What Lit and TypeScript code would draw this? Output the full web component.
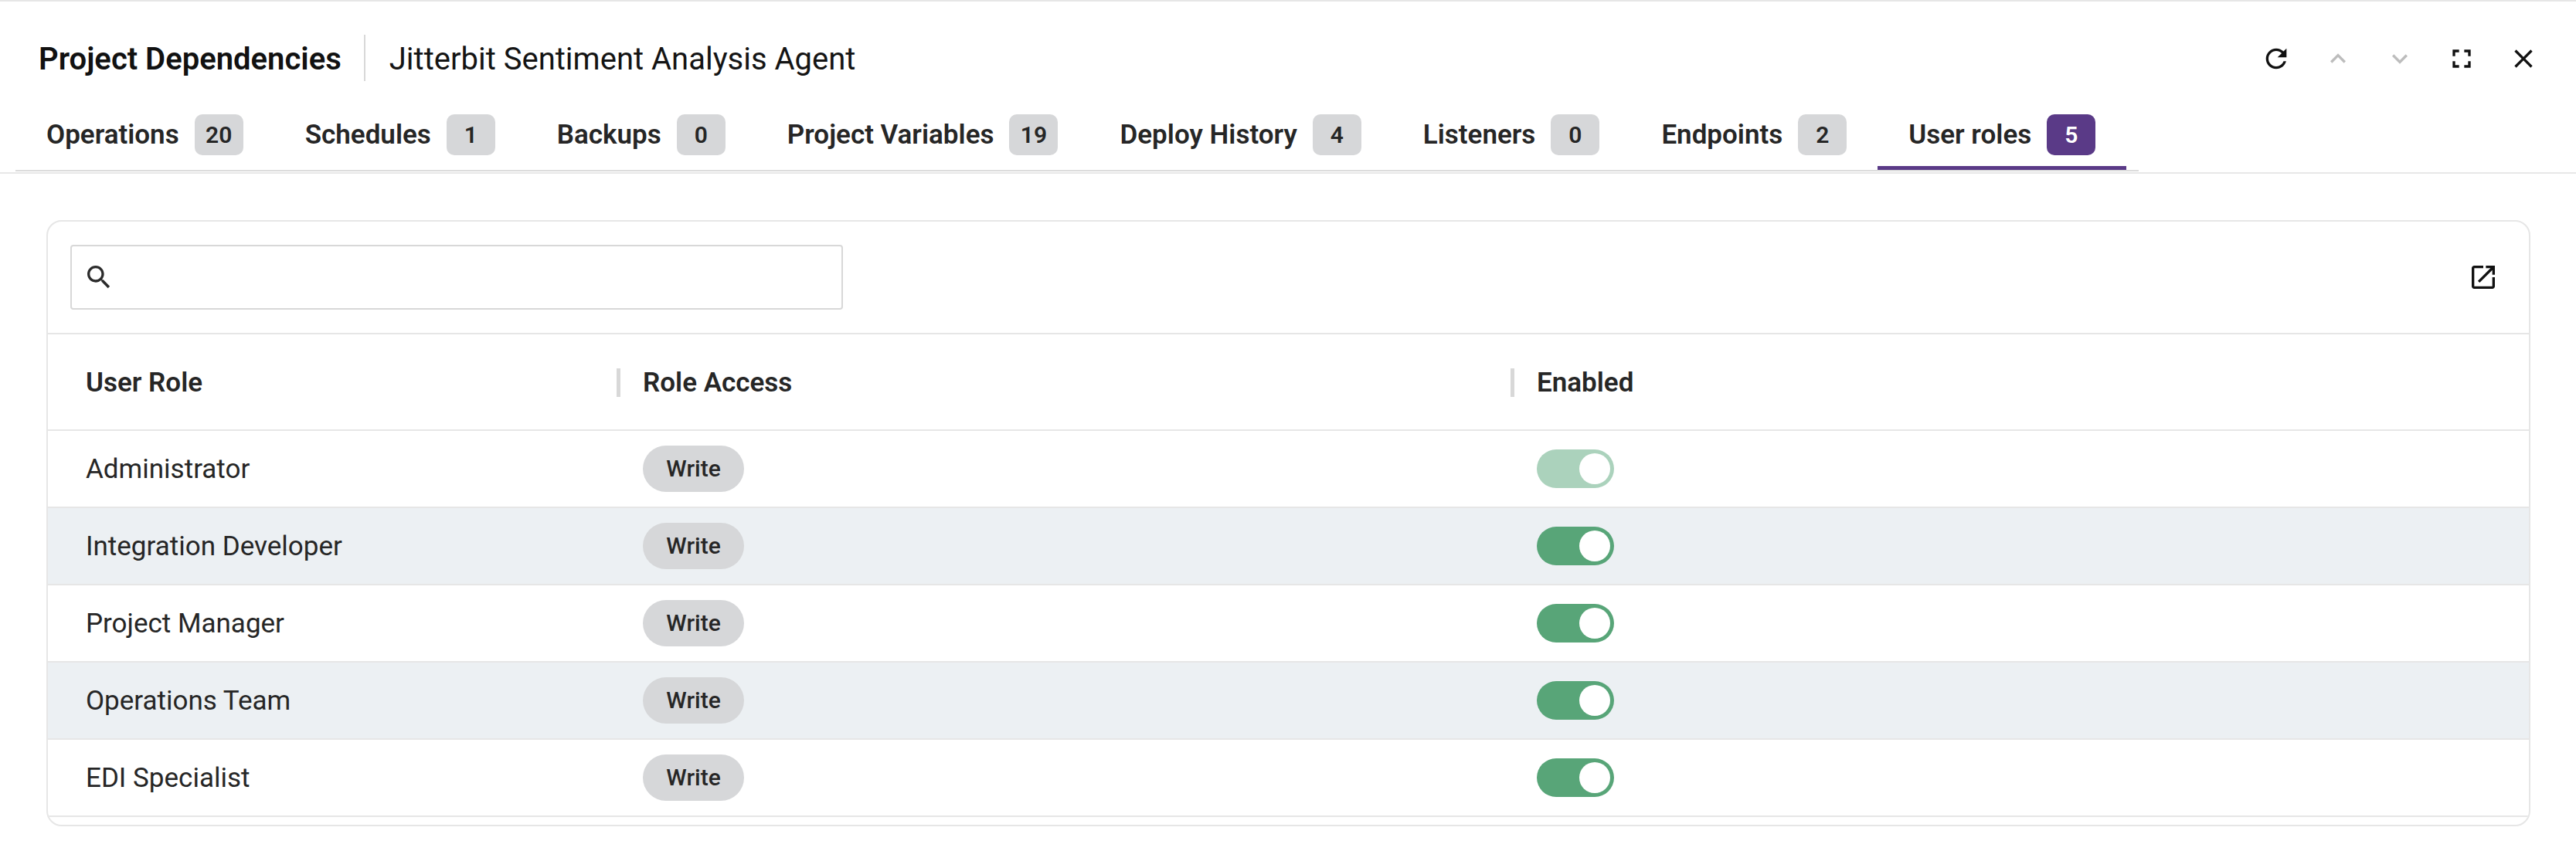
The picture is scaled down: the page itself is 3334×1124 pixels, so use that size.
import { LitElement, css, html, svg } from 'lit';
import { customElement } from 'lit/decorators.js';
import { classMap } from 'lit/directives/class-map.js';

const TABS = [
  { label: 'Operations', count: 20 },
  { label: 'Schedules', count: 1 },
  { label: 'Backups', count: 0 },
  { label: 'Project Variables', count: 19 },
  { label: 'Deploy History', count: 4 },
  { label: 'Listeners', count: 0 },
  { label: 'Endpoints', count: 2 },
  { label: 'User roles', count: 5, active: true },
];

const ROLES = [
  { name: 'Administrator', locked: true },
  { name: 'Integration Developer' },
  { name: 'Project Manager' },
  { name: 'Operations Team' },
  { name: 'EDI Specialist' },
];

// material icon paths, 24 unit box
const ICONS = {
  refresh:
    'M17.65 6.35C16.2 4.9 14.21 4 12 4c-4.42 0-7.99 3.58-7.99 8s3.57 8 7.99 8c3.73 0 6.84-2.55 7.73-6h-2.08c-.82 2.33-3.04 4-5.65 4-3.31 0-6-2.69-6-6s2.69-6 6-6c1.66 0 3.14.69 4.22 1.78L13 11h7V4l-2.35 2.35z',
  up: 'M12 8l-6 6 1.41 1.41L12 10.83l4.59 4.58L18 14z',
  down: 'M16.59 8.59L12 13.17 7.41 8.59 6 10l6 6 6-6z',
  full: 'M7 14H5v5h5v-2H7v-3zm-2-4h2V7h3V5H5v5zm12 7h-3v2h5v-5h-2v3zM14 5v2h3v3h2V5h-5z',
  close:
    'M19 6.41L17.59 5 12 10.59 6.41 5 5 6.41 10.59 12 5 17.59 6.41 19 12 13.41 17.59 19 19 17.59 13.41 12z',
  search:
    'M15.5 14h-.79l-.28-.27C15.41 12.59 16 11.11 16 9.5 16 5.91 13.09 3 9.5 3S3 5.91 3 9.5 5.91 16 9.5 16c1.61 0 3.09-.59 4.23-1.57l.27.28v.79l5 4.99L20.49 19l-4.99-5zm-6 0C7.01 14 5 11.99 5 9.5S7.01 5 9.5 5 14 7.01 14 9.5 11.99 14 9.5 14z',
  open: 'M19 19H5V5h7V3H5c-1.11 0-2 .9-2 2v14c0 1.1.89 2 2 2h14c1.1 0 2-.9 2-2v-7h-2v7zM14 3v2h3.59l-9.83 9.83 1.41 1.41L19 6.41V10h2V3h-7z',
};

const icon = (d: string, cls = '') =>
  html`<svg class="icon ${cls}" viewBox="0 0 24 24">${svg`<path d=${d}></path>`}</svg>`;

@customElement('app-root')
class AppRoot extends LitElement {
  static styles = css`
    :host {
      display: block;
      height: 1124px;
      background: #fff;
      color: #262626;
      font-family: Roboto, 'Liberation Sans', sans-serif;
      border-top: 2px solid #e6e6e6;
      box-sizing: border-box;
    }

    .icon {
      display: block;
      width: 40px;
      height: 40px;
      fill: #111;
      flex: none;
    }

    .icon.off {
      fill: #bdbdbd;
    }

    .icon.dim {
      fill: #2b2b2b;
    }

    .top {
      display: flex;
      align-items: center;
      height: 146px;
      padding: 2px 48px 0 50px;
      box-sizing: border-box;
    }

    .top h1 {
      margin: 0;
      font-size: 40px;
      font-weight: 600;
      color: #111;
    }

    .top .sep {
      width: 2px;
      height: 60px;
      margin: -2px 31px 0 29px;
      background: #d8d8d8;
    }

    .top .name {
      font-size: 40px;
      color: #141414;
      flex: 1;
    }

    .actions {
      display: flex;
      gap: 40px;
    }

    .tabs {
      display: inline-flex;
      vertical-align: top;
      margin-left: 20px;
      padding-right: 16px;
      border-bottom: 2px solid #dcdcdc;
    }

    .tab {
      display: flex;
      align-items: flex-start;
      gap: 20px;
      height: 72px;
      padding: 0 40px;
      box-sizing: border-box;
      border-bottom: 5px solid transparent;
      font-size: 35px;
      font-weight: 600;
      line-height: 53px;
      color: #262626;
    }

    .tab.active {
      border-bottom-color: #5a3a87;
    }

    .badge {
      min-width: 63px;
      height: 53px;
      border-radius: 10px;
      background: #d6d7d9;
      text-align: center;
      font-size: 30px;
    }

    .tab.active .badge {
      background: #5a3a87;
      color: #fff;
    }

    .rule {
      height: 3px;
      box-sizing: border-box;
      border-top: 1px solid #fff;
      border-bottom: 2px solid #e8e8e8;
    }

    .tabline {
      height: 74px;
    }

    .card {
      margin: 60px 59px 0 60px;
      height: 785px;
      box-sizing: border-box;
      border: 2px solid #e6e6e6;
      border-radius: 20px;
      overflow: hidden;
    }

    .tools {
      display: flex;
      align-items: center;
      justify-content: space-between;
      height: 146px;
      padding: 0 39px 0 29px;
      box-sizing: border-box;
      border-bottom: 2px solid #e6e6e6;
    }

    .search {
      display: flex;
      align-items: center;
      width: 1000px;
      height: 84px;
      padding-left: 15px;
      box-sizing: border-box;
      border: 2px solid #d8d8d8;
      border-radius: 4px;
    }

    .row {
      display: grid;
      grid-template-columns: 736px 1157px 1fr;
      align-items: center;
      height: 100px;
      box-sizing: border-box;
      border-bottom: 2px solid #e6e6e6;
      font-size: 35px;
    }

    .row.alt {
      background: #ecf0f3;
    }

    .row.head {
      height: 125px;
      padding-top: 2px;
      font-weight: 600;
    }

    .cell {
      padding-left: 34px;
      display: flex;
      align-items: center;
    }

    .cell:first-child {
      padding-left: 49px;
    }

    .head .cell {
      padding-left: 0;
      gap: 29px;
    }

    .head .cell:first-child {
      padding-left: 49px;
    }

    .grip {
      width: 5px;
      height: 37px;
      background: #d8d8d8;
    }

    .pill {
      width: 131px;
      height: 60px;
      border-radius: 30px;
      background: #d6d7d9;
      text-align: center;
      line-height: 60px;
      font-size: 30px;
      font-weight: 480;
    }

    .toggle {
      width: 100px;
      height: 50px;
      padding: 5px;
      box-sizing: border-box;
      border-radius: 25px;
      background: #58a578;
      display: flex;
      justify-content: flex-end;
    }

    .toggle.locked {
      background: #abd2bc;
    }

    .toggle i {
      width: 40px;
      height: 40px;
      border-radius: 50%;
      background: #fff;
    }
  `;

  render() {
    return html`
      <header class="top">
        <h1>Project Dependencies</h1>
        <span class="sep"></span>
        <span class="name">Jitterbit Sentiment Analysis Agent</span>
        <div class="actions">
          ${icon(ICONS.refresh)} ${icon(ICONS.up, 'off')} ${icon(ICONS.down, 'off')}
          ${icon(ICONS.full)} ${icon(ICONS.close)}
        </div>
      </header>
      <div class="tabline">
        <nav class="tabs">
          ${TABS.map(
            (t) => html`<div class=${classMap({ tab: true, active: !!t.active })}>
              <span>${t.label}</span><span class="badge">${t.count}</span>
            </div>`
          )}
        </nav>
      </div>
      <div class="rule"></div>
      <section class="card">
        <div class="tools">
          <div class="search">${icon(ICONS.search, 'dim')}</div>
          ${icon(ICONS.open)}
        </div>
        <div class="row head">
          <div class="cell">User Role</div>
          <div class="cell"><span class="grip"></span>Role Access</div>
          <div class="cell"><span class="grip"></span>Enabled</div>
        </div>
        ${ROLES.map(
          (r, i) => html`<div class=${classMap({ row: true, alt: i % 2 === 1 })}>
            <div class="cell">${r.name}</div>
            <div class="cell"><span class="pill">Write</span></div>
            <div class="cell">
              <span class=${classMap({ toggle: true, locked: !!r.locked })}><i></i></span>
            </div>
          </div>`
        )}
      </section>
    `;
  }
}

export default AppRoot;

declare global {
  interface HTMLElementTagNameMap {
    'app-root': AppRoot;
  }
}
